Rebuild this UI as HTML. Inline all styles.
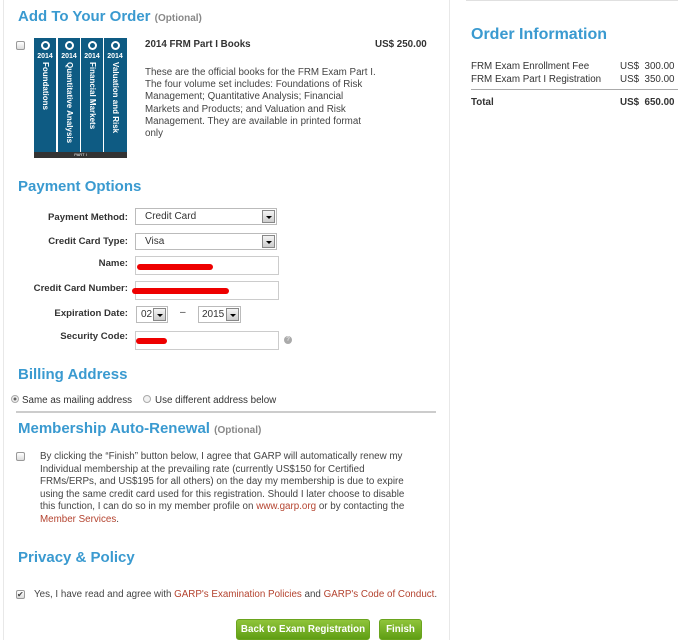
<!DOCTYPE html>
<html><head><meta charset="utf-8"><style>
*{box-sizing:border-box;margin:0;padding:0}
body{width:678px;height:640px;background:#fff;font-family:"Liberation Sans",Arial,sans-serif;color:#333;position:relative;overflow:hidden;font-size:10px}
.a{position:absolute}
h2{position:absolute;font-size:15px;color:#3a9ad0;font-weight:bold;white-space:nowrap}
h2 small{font-size:10px;color:#888;font-weight:bold}
.cb{position:absolute;width:9px;height:9px;border:1px solid #999;border-radius:2px;background:linear-gradient(#fff,#ddd)}
.lbl{position:absolute;right:550px;font-weight:bold;font-size:9.6px;color:#333;white-space:nowrap}
.sel{position:absolute;height:17px;border:1px solid #bbb;background:#fff;font-size:10px;padding:2px 0 0 9px}
.sel i{position:absolute;right:1px;top:1px;width:13px;height:13px;border:1px solid #888;background:linear-gradient(#f4f4f4,#ccc)}
.sel i:after{content:"";position:absolute;left:3px;top:5px;border:3px solid transparent;border-top:3px solid #000;border-bottom:0}
.inp{position:absolute;height:19px;border:1px solid #ccc;background:#fff}
.red{position:absolute;height:6px;background:#e00;border-radius:4px}
.spine{position:absolute;top:0;width:22px;height:114px;background:#0e5b83;color:#fff}
.spine b{position:absolute;top:15px;left:0;width:22px;text-align:center;font-size:7px}
.spine span{position:absolute;top:24px;left:16px;transform-origin:0 0;transform:rotate(90deg);font-size:8px;font-weight:bold;white-space:nowrap}
.spine em{position:absolute;top:3px;left:7px;width:9px;height:9px;border:2px solid #fff;border-radius:50%}
.link{color:#b4432f}
.btn{position:absolute;height:21px;background:linear-gradient(#8fc43a,#5f9e14);border:1px solid #6aa41e;border-radius:3px;color:#fff;font-weight:bold;font-size:9.8px;text-align:center;line-height:20px;white-space:nowrap}
.t{font-size:9.8px}
</style></head><body>
<div class="a" style="left:3px;top:0;width:1px;height:640px;background:#e8e8e8"></div>
<div class="a" style="left:449px;top:0;width:1px;height:640px;background:#e8e8e8"></div>
<div class="a" style="left:466px;top:0;width:212px;height:1px;background:#e0e0e0"></div>

<h2 style="left:18px;top:8px">Add To Your Order <small>(Optional)</small></h2>
<div class="cb" style="left:16px;top:41px"></div>
<div class="a" style="left:34px;top:38px;width:93px;height:121px;background:#fff">
 <div class="spine" style="left:0"><em></em><b>2014</b><span>Foundations</span></div>
 <div class="spine" style="left:24px"><em></em><b>2014</b><span>Quantitative Analysis</span></div>
 <div class="spine" style="left:47px"><em></em><b>2014</b><span>Financial Markets</span></div>
 <div class="spine" style="left:70px;width:23px"><em></em><b>2014</b><span>Valuation and Risk</span></div>
 <div class="a" style="left:0;top:114px;width:93px;height:6px;background:#333;color:#fff;font-size:4px;text-align:center">PART I</div>
</div>
<div class="a" style="left:145px;top:39px;font-weight:bold;font-size:9.8px">2014 FRM Part I Books</div>
<div class="a" style="left:375px;top:39px;font-weight:bold;font-size:9.8px">US$ 250.00</div>
<div class="a t" style="left:145px;top:67px;width:233px;line-height:12.2px;color:#444">These are the official books for the FRM Exam Part&nbsp;I. The four volume set includes: Foundations of Risk Management; Quantitative Analysis; Financial Markets and Products; and Valuation and Risk Management. They are available in printed format only</div>

<h2 style="left:18px;top:178px">Payment Options</h2>
<div class="lbl" style="top:212px">Payment Method:</div>
<div class="sel" style="left:135px;top:208px;width:142px">Credit Card<i></i></div>
<div class="lbl" style="top:236px">Credit Card Type:</div>
<div class="sel" style="left:135px;top:233px;width:142px">Visa<i></i></div>
<div class="lbl" style="top:258px">Name:</div>
<div class="inp" style="left:135px;top:256px;width:144px"></div>
<div class="red" style="left:137px;top:264px;width:76px"></div>
<div class="lbl" style="top:283px">Credit Card Number:</div>
<div class="inp" style="left:135px;top:281px;width:144px"></div>
<div class="red" style="left:132px;top:288px;width:97px"></div>
<div class="lbl" style="top:308px">Expiration Date:</div>
<div class="sel" style="left:136px;top:306px;width:32px;padding-left:4px">02<i></i></div>
<div class="a" style="left:180px;top:307px">–</div>
<div class="sel" style="left:198px;top:306px;width:43px;padding-left:3px">2015<i></i></div>
<div class="lbl" style="top:331px">Security Code:</div>
<div class="inp" style="left:135px;top:331px;width:144px"></div>
<div class="red" style="left:136px;top:338px;width:31px"></div>
<div class="a" style="left:284px;top:336px;width:8px;height:8px;border-radius:50%;background:#aaa;color:#fff;font-size:6px;text-align:center;line-height:8px">?</div>

<h2 style="left:18px;top:366px">Billing Address</h2>
<div class="a" style="left:11px;top:395px;width:8px;height:8px;border-radius:50%;border:1px solid #aaa;background:radial-gradient(#666 30%,#eee 40%)"></div>
<div class="a t" style="left:22px;top:395px">Same as mailing address</div>
<div class="a" style="left:143px;top:395px;width:8px;height:8px;border-radius:50%;border:1px solid #aaa;background:#f2f2f2"></div>
<div class="a t" style="left:155px;top:395px">Use different address below</div>
<div class="a" style="left:16px;top:411px;width:420px;height:2px;background:#ccc"></div>

<h2 style="left:18px;top:420px">Membership Auto-Renewal <small>(Optional)</small></h2>
<div class="cb" style="left:16px;top:452px"></div>
<div class="a t" style="left:40px;top:451px;width:374px;line-height:12.6px;color:#444">By clicking the “Finish” button below, I agree that GARP will automatically renew my Individual membership at the prevailing rate (currently US$150 for Certified FRMs/ERPs, and US$195 for all others) on the day my membership is due to expire using the same credit card used for this registration. Should I later choose to disable this function, I can do so in my member profile on <span class="link">www.garp.org</span> or by contacting the<br><span class="link">Member Services</span>.</div>

<h2 style="left:18px;top:549px">Privacy &amp; Policy</h2>
<div class="cb" style="left:16px;top:590px;font-size:8px;line-height:7px;color:#444">✔</div>
<div class="a t" style="left:34px;top:589px;color:#444;white-space:nowrap">Yes, I have read and agree with <span class="link">GARP's Examination Policies</span> and <span class="link">GARP's Code of Conduct</span>.</div>
<div class="btn" style="left:236px;top:619px;width:134px">Back to Exam Registration</div>
<div class="btn" style="left:379px;top:619px;width:43px">Finish</div>

<h2 style="left:471px;top:26px;font-size:16px">Order Information</h2>
<div class="a t" style="left:471px;top:61px;line-height:12.5px">FRM Exam Enrollment Fee<br>FRM Exam Part I Registration</div>
<div class="a t" style="left:620px;top:61px;line-height:12.5px">US$&nbsp;&nbsp;300.00<br>US$&nbsp;&nbsp;350.00</div>
<div class="a" style="left:471px;top:89px;width:207px;height:1px;background:#aaa"></div>
<div class="a t" style="left:471px;top:97px;font-weight:bold">Total</div>
<div class="a t" style="left:620px;top:97px;font-weight:bold">US$&nbsp;&nbsp;650.00</div>
</body></html>
